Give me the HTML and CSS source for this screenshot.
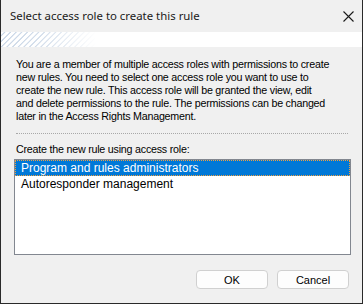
FILE: index.html
```html
<!DOCTYPE html>
<html>
<head>
<meta charset="utf-8">
<link rel="stylesheet" href="styles.css">
</head>
<body>
<div class="window">
  <div class="titlebar">
    <span class="title">Select access role to create this rule</span>
    <svg class="close" width="11" height="11" viewBox="0 0 11 11"><path d="M0.5 0.5 L10.5 10.5 M10.5 0.5 L0.5 10.5" stroke="#1a1a1a" stroke-width="1.1" fill="none"/></svg>
  </div>
  <div class="banner"></div>
  <div class="content">
    <p class="intro">You are a member of multiple access roles with permissions to create<br>new rules. You need to select one access role you want to use to<br>create the new rule. This access role will be granted the view, edit<br>and delete permissions to the rule. The permissions can be changed<br>later in the Access Rights Management.</p>
    <div class="separator"></div>
    <div class="label">Create the new rule using access role:</div>
    <div class="listbox">
      <div class="item selected">Program and rules administrators</div>
      <div class="item">Autoresponder management</div>
    </div>
    <div class="footer">
      <button class="btn">OK</button>
      <button class="btn">Cancel</button>
    </div>
  </div>
</div>
</body>
</html>
```

FILE: styles.css
```css
html, body {
  margin: 0;
  padding: 0;
  background: #f0f0f0;
}
.window {
  width: 363px;
  height: 304px;
  box-sizing: border-box;
  border-left: 1px solid #2a2a2a;
  border-right: 1px solid #2a2a2a;
  border-bottom: 1px solid #2a2a2a;
  background: #f0f0f0;
  display: flex;
  flex-direction: column;
  font-family: "Liberation Sans", Arial, sans-serif;
  font-size: 10.7px;
  letter-spacing: -0.22px;
  color: #000;
}
.titlebar {
  height: 31px;
  flex: none;
  display: flex;
  align-items: center;
  justify-content: space-between;
  padding: 0 8px 1px 9px;
  background: #f0f0f0;
}
.title {
  font-family: "Noto Sans", "Open Sans", sans-serif;
  font-size: 11.4px;
  letter-spacing: 0;
  color: #1a1a1a;
}
.close {
  display: block;
  margin-top: 1px;
}
.banner {
  height: 15px;
  flex: none;
  background-color: #ffffff;
  background-image:
    linear-gradient(to right, rgba(255,255,255,0) 0px, rgba(255,255,255,0.2) 40px, #ffffff 95px),
    repeating-linear-gradient(-45deg, #ffffff 0px, #ffffff 2.2px, #c9d6e6 2.8px, #c9d6e6 3.4px, #ffffff 4px),
    repeating-radial-gradient(circle at 185px 70px, #ffffff 0px, #ffffff 4px, #ececec 5px, #ffffff 6px);
  background-size: 100% 100%, 100% 100%, 230px 100%;
  background-repeat: no-repeat;
}
.content {
  flex: 1;
  display: flex;
  flex-direction: column;
  padding: 0 11px 0 13px;
}
.intro {
  margin: 11px 0 0 2px;
  line-height: 13px;
  white-space: nowrap;
}
.separator {
  margin: 10px 3px 0 2px;
  border-top: 1px dotted #a8a8a8;
  height: 0;
}
.label {
  margin: 9px 0 0 2px;
  line-height: 13px;
}
.listbox {
  margin-top: 3px;
  height: 96px;
  box-sizing: border-box;
  border: 1px solid #828790;
  background: #ffffff;
}
.item {
  height: 16px;
  line-height: 16px;
  padding-left: 6px;
  box-sizing: border-box;
  font-size: 12px;
  letter-spacing: 0;
}
.item.selected {
  background: #0078d7;
  color: #ffffff;
  outline: 1px dotted #f0a040;
  outline-offset: -1px;
}
.footer {
  display: flex;
  justify-content: flex-end;
  gap: 9px;
  margin-top: 15px;
  padding-right: 2px;
}
.btn {
  width: 72px;
  height: 19px;
  box-sizing: border-box;
  border: 1px solid #d0d0d0;
  border-radius: 4px;
  background: #fdfdfd;
  font-family: "Liberation Sans", Arial, sans-serif;
  font-size: 11px;
  color: #000;
  padding: 0;
}
```
